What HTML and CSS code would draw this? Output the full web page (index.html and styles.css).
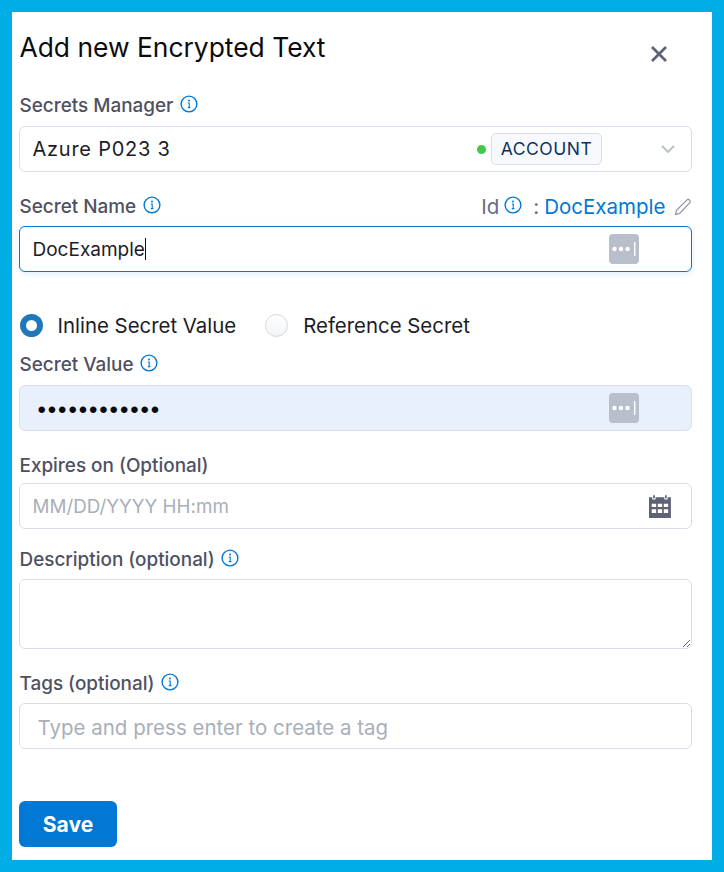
FILE: index.html
```html
<!DOCTYPE html>
<html lang="en">
<head>
<meta charset="utf-8">
<title>Add new Encrypted Text</title>
<link rel="stylesheet" href="styles.css">
</head>
<body>
<svg class="sprite" width="0" height="0" aria-hidden="true">
  <symbol id="info" viewBox="0 0 18 18">
    <circle cx="9" cy="9" r="7.9" fill="none" stroke="currentColor" stroke-width="1.4"/>
    <circle cx="9" cy="5.4" r="1" fill="currentColor"/>
    <path d="M7.8 8h1.4v4.4M7.8 12.6h2.6" fill="none" stroke="currentColor" stroke-width="1.1"/>
  </symbol>
  <symbol id="keys" viewBox="0 0 30 30">
    <rect width="30" height="30" rx="4" fill="#b9bfca"/>
    <circle cx="5.5" cy="15" r="2.2" fill="#fff"/>
    <circle cx="12" cy="15" r="2.2" fill="#fff"/>
    <circle cx="18.5" cy="15" r="2.2" fill="#fff"/>
    <rect x="25" y="8" width="1.4" height="14" fill="#fff"/>
  </symbol>
</svg>
<main class="panel">
  <header class="head">
    <h1 class="title">Add new Encrypted Text</h1>
    <button class="close" type="button" aria-label="Close">
      <svg width="18" height="18" viewBox="0 0 18 18"><path d="M2 2l14 14M16 2L2 16" stroke="#5f6176" stroke-width="2.8" fill="none"/></svg>
    </button>
  </header>

  <div class="label mgr-label">Secrets Manager <svg class="info"><use href="#info"/></svg></div>
  <div class="box">
    <span class="box-text spaced">Azure P023 3</span>
    <span class="dot"></span>
    <span class="scope">ACCOUNT</span>
    <svg class="chev" width="14" height="8" viewBox="0 0 14 8"><path d="M1 1l6 6 6-6" stroke="#b9bec8" stroke-width="1.8" fill="none"/></svg>
  </div>

  <div class="name-row">
    <div class="label">Secret Name <svg class="info"><use href="#info"/></svg></div>
    <div class="id-wrap">
      <span class="id-label">Id</span>
      <svg class="info"><use href="#info"/></svg>
      <span class="id-colon">:</span>
      <span class="id-value">DocExample</span>
      <svg class="pencil" width="18" height="18" viewBox="0 0 18 18"><path d="M1.6 16.4l.9-4L12.8 2.1c.8-.8 2-.8 2.8 0s.8 2 0 2.8L5.6 15.5z" fill="none" stroke="#8b8d9e" stroke-width="1.1"/></svg>
    </div>
  </div>
  <div class="box focus">
    <span class="box-text">DocExample</span><span class="caret"></span>
    <svg class="keys"><use href="#keys"/></svg>
  </div>

  <div class="radios">
    <label class="radio"><span class="rad on"></span>Inline Secret Value</label>
    <label class="radio"><span class="rad"></span>Reference Secret</label>
  </div>

  <div class="label value-label">Secret Value <svg class="info"><use href="#info"/></svg></div>
  <div class="box filled">
    <span class="dots">••••••••••••</span>
    <svg class="keys"><use href="#keys"/></svg>
  </div>

  <div class="label exp-label">Expires on (Optional)</div>
  <div class="box">
    <span class="box-text placeholder small">MM/DD/YYYY HH:mm</span>
    <svg class="cal" width="23" height="23" viewBox="1 1 21 21">
      <path fill="#5f6176" fill-rule="evenodd" d="M1 3h3v2.2h3V3h8v2.2h3V3h3v19H1zM3.5 9v3h4V9zm5.5 0v3h4V9zm5.5 0v3h4V9zM3.5 14v3.5h4V14zm5.5 0v3.5h4V14zm5.5 0v3.5h4V14z"/>
      <rect x="4.8" y="1" width="1.5" height="3.2" rx=".7" fill="#5f6176"/>
      <rect x="15.7" y="1" width="1.5" height="3.2" rx=".7" fill="#5f6176"/>
    </svg>
  </div>

  <div class="label desc-label">Description (optional) <svg class="info"><use href="#info"/></svg></div>
  <textarea class="area" aria-label="Description"></textarea>

  <div class="label tags-label">Tags (optional) <svg class="info"><use href="#info"/></svg></div>
  <div class="box">
    <span class="box-text placeholder tags-ph">Type and press enter to create a tag</span>
  </div>

  <button class="save" type="button">Save</button>
</main>
</body>
</html>
```
FILE: styles.css
```css
* { box-sizing: border-box; }
html, body { margin: 0; height: 100%; }
body {
  background: #00ade4;
  padding: 12px;
  font-family: Inter, "Noto Sans", sans-serif;
  overflow: hidden;
}
.sprite { position: absolute; }
.panel {
  background: #fff;
  height: 848px;
  padding: 0 20.5px 0 7px;
  display: flex;
  flex-direction: column;
}
.head {
  display: flex;
  justify-content: space-between;
  height: 66px;
}
.title {
  margin: 18px 0 0 0.5px;
  font-size: 26.4px;
  line-height: 34px;
  font-weight: 400;
  color: #0b0b0d;
}
.close {
  background: none;
  border: 0;
  padding: 0;
  margin: 33px 24px 0 0;
  width: 18px;
  height: 18px;
  display: block;
}
.close svg { display: block; }
.label {
  font-size: 18.9px;
  line-height: 24px;
  font-weight: 500;
  color: #4f5162;
  display: flex;
  align-items: center;
  padding-left: 0.5px;
  gap: 6.5px;
}
.info {
  width: 18px;
  height: 18px;
  color: #0278d5;
  position: relative;
  top: -2px;
  flex: none;
}
.mgr-label { margin: 16px 0 8px; }
.box {
  height: 46px;
  border: 1.5px solid #dcdcea;
  border-radius: 6px;
  background: #fff;
  display: flex;
  align-items: center;
  padding: 0 12.5px;
  flex: none;
}
.box-text {
  font-size: 19px;
  color: #1c1c28;
  flex: none;
}
.spaced { font-size: 20px; letter-spacing: 0.75px; flex: 1; }
.dot {
  width: 9px;
  height: 9px;
  border-radius: 50%;
  background: #42c74f;
  margin-right: 5px;
}
.scope {
  height: 32px;
  width: 111px;
  border: 1.5px solid #dcdcea;
  border-radius: 5px;
  background: #f8f9fc;
  color: #0a3364;
  font-size: 17.5px;
  letter-spacing: 0.5px;
  display: flex;
  align-items: center;
  justify-content: center;
  padding-bottom: 2px;
}
.chev { margin: 0 3px 0 59px; }
.name-row {
  display: flex;
  justify-content: space-between;
  align-items: center;
  margin: 23px 0 7px;
  height: 24px;
}
.id-wrap { display: flex; align-items: center; font-size: 20.5px; line-height: 24px; }
.id-label { color: #6b6d85; margin-right: 5px; }
.id-colon { color: #6b6d85; margin: 0 5px 0 11px; }
.id-value { color: #0278d5; }
.pencil { margin-left: 8px; }
.focus {
  border-color: #0278d5;
  box-shadow: 0 2px 6px rgba(2, 120, 213, 0.12);
}
.caret {
  width: 1px;
  height: 22px;
  background: #111;
}
.keys {
  width: 30px;
  height: 30px;
  margin-left: auto;
  margin-right: 39.5px;
}
.radios {
  display: flex;
  gap: 29px;
  margin: 41px 0 0;
  height: 24px;
  padding-left: 0.5px;
}
.radio {
  display: flex;
  align-items: center;
  gap: 15px;
  font-size: 20.4px;
  color: #1c1c28;
}
.rad {
  width: 23px;
  height: 23px;
  border-radius: 50%;
  border: 1.5px solid #d6d8e0;
  background: linear-gradient(#fff, #f3f4f7);
}
.rad.on {
  border: 6.5px solid #1f78b8;
  background: #fff;
}
.value-label { margin: 16px 0 8px; }
.filled { background: #e8f0fc; }
.dots {
  font-size: 24px;
  letter-spacing: 1.9px;
  color: #0b0b0d;
  font-family: "Liberation Sans", sans-serif;
  padding: 4px 0 0 5px;
}
.exp-label { margin: 23px 0 5px; }
.placeholder { color: #a9afb9; }
.small { font-size: 18.8px; }
.tags-ph { margin-left: 5px; padding-top: 2px; font-size: 20.5px; }
.cal { margin-left: auto; margin-right: 6.5px; }
.desc-label { margin: 19px 0 7px; }
.area {
  display: block;
  height: 70px;
  flex: none;
  border: 1.5px solid #dcdcea;
  border-radius: 6px;
  background: #fff;
  resize: vertical;
  padding: 8px 12px;
  outline: 0;
}
.tags-label { margin: 23px 0 7px; }
.save {
  margin-top: 52px;
  width: 98px;
  height: 46px;
  border: 0;
  border-radius: 6px;
  background: #0278d5;
  color: #fff;
  font-family: Inter, sans-serif;
  font-size: 21px;
  font-weight: 700;
  padding: 0;
  flex: none;
}
```
